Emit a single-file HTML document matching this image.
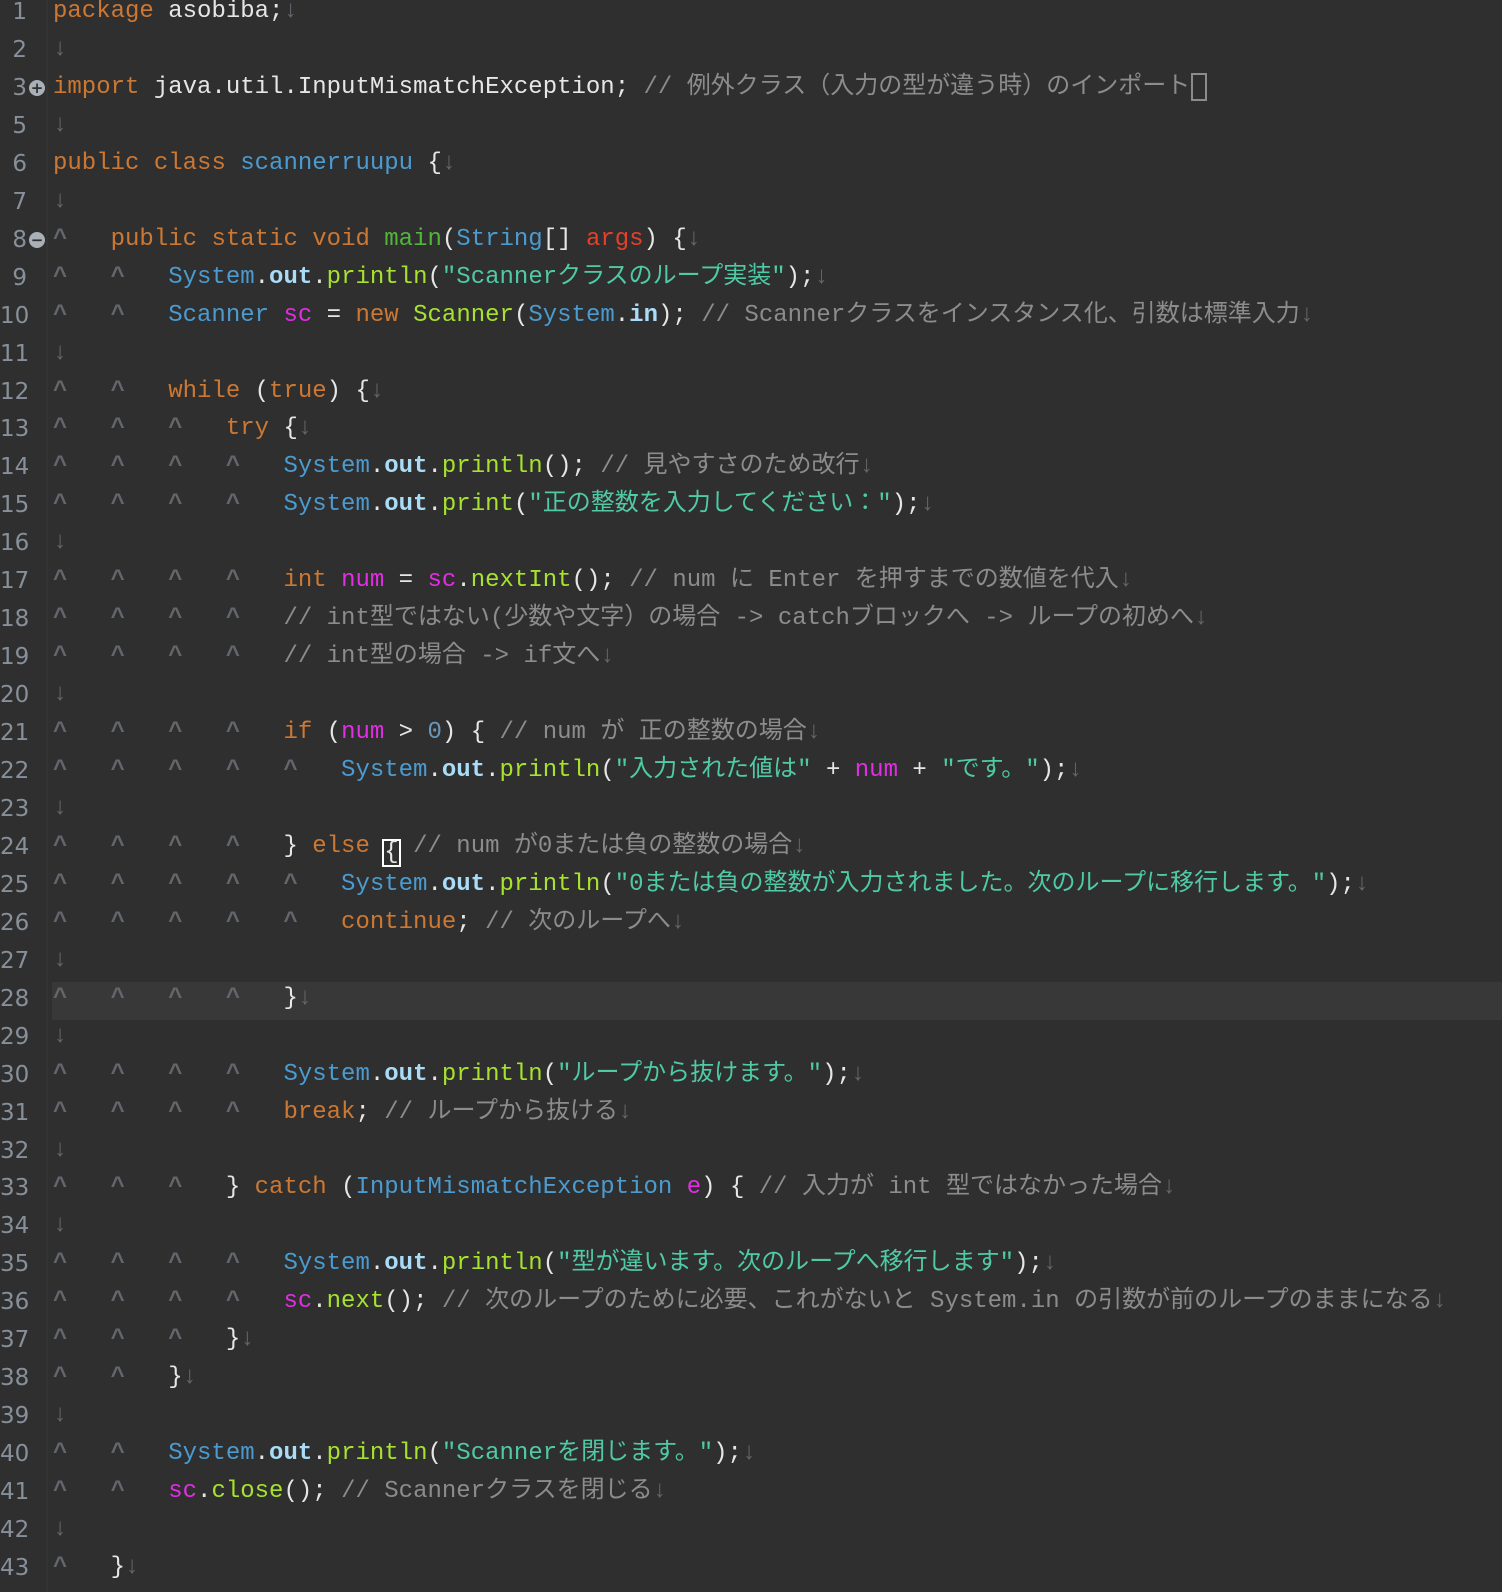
<!DOCTYPE html>
<html><head><meta charset="utf-8">
<style>
html,body{margin:0;padding:0;background:#2f2f2f;width:1502px;height:1592px;overflow:hidden}
#ed{position:relative;width:1502px;height:1592px;font-family:"Liberation Mono","Noto Sans CJK JP",monospace;font-size:24px;color:#e6e6e6}
.row{position:absolute;left:0;width:1502px;height:38px;line-height:38px;white-space:pre}
.ln{position:absolute;left:0;width:27px;text-align:right;font-family:"DejaVu Sans","Liberation Sans",sans-serif;font-size:23px;color:#87909a}
.code{position:absolute;left:53px}
.sep{position:absolute;left:46px;top:0;width:2px;height:1592px;background:#333}
.hl{position:absolute;left:52px;width:1450px;height:38px;background:#383838}
.k{color:#cc7833}.t{color:#4b9bd0}.o{color:#a9dcf7;font-weight:bold}.m{color:#a6e22e}
.g{color:#52b63b}.s{color:#4fcaa5}.v{color:#e12de3}.a{color:#e5402b}.c{color:#8c8c8c}
.n{color:#6897bb}.w{color:#63666b;font-weight:bold}
.fold{position:absolute;left:29px;width:16px;height:16px;border-radius:50%;background:#a9b0b8;color:#2f2f2f;font:bold 15px/16px "DejaVu Sans",sans-serif;text-align:center}
.box{display:inline-block;width:12px;height:24px;border:2px solid #8c8c8c;vertical-align:middle;margin-left:1px}
.cur{display:inline-block;border:2px solid #fff;height:24px;line-height:24px;vertical-align:-6px;margin:0 -2px}
</style></head><body><div id="ed">
<div class="sep"></div>
<div class="hl" style="top:982px"></div>
<div id="rows"></div>
</div>
<script>
var T='<span class="w">^   </span>';
function t(n){return T.repeat(n);}
var D='<span class="w">↓</span>';
var L=[
[1,'<span class="k">package</span> asobiba;'+D],
[2,D],
[3,'<span class="k">import</span> java.util.InputMismatchException; <span class="c">// 例外クラス（入力の型が違う時）のインポート</span><span class="box"></span>'],
[5,D],
[6,'<span class="k">public</span> <span class="k">class</span> <span class="t">scannerruupu</span> {'+D],
[7,D],
[8,t(1)+'<span class="k">public</span> <span class="k">static</span> <span class="k">void</span> <span class="g">main</span>(<span class="t">String</span>[] <span class="a">args</span>) {'+D],
[9,t(2)+'<span class="t">System</span>.<span class="o">out</span>.<span class="m">println</span>(<span class="s">"Scannerクラスのループ実装"</span>);'+D],
[10,t(2)+'<span class="t">Scanner</span> <span class="v">sc</span> = <span class="k">new</span> <span class="m">Scanner</span>(<span class="t">System</span>.<span class="o">in</span>); <span class="c">// Scannerクラスをインスタンス化、引数は標準入力</span>'+D],
[11,D],
[12,t(2)+'<span class="k">while</span> (<span class="k">true</span>) {'+D],
[13,t(3)+'<span class="k">try</span> {'+D],
[14,t(4)+'<span class="t">System</span>.<span class="o">out</span>.<span class="m">println</span>(); <span class="c">// 見やすさのため改行</span>'+D],
[15,t(4)+'<span class="t">System</span>.<span class="o">out</span>.<span class="m">print</span>(<span class="s">"正の整数を入力してください："</span>);'+D],
[16,D],
[17,t(4)+'<span class="k">int</span> <span class="v">num</span> = <span class="v">sc</span>.<span class="m">nextInt</span>(); <span class="c">// num に Enter を押すまでの数値を代入</span>'+D],
[18,t(4)+'<span class="c">// int型ではない(少数や文字）の場合 -> catchブロックへ -> ループの初めへ</span>'+D],
[19,t(4)+'<span class="c">// int型の場合 -> if文へ</span>'+D],
[20,D],
[21,t(4)+'<span class="k">if</span> (<span class="v">num</span> > <span class="n">0</span>) { <span class="c">// num が 正の整数の場合</span>'+D],
[22,t(5)+'<span class="t">System</span>.<span class="o">out</span>.<span class="m">println</span>(<span class="s">"入力された値は"</span> + <span class="v">num</span> + <span class="s">"です。"</span>);'+D],
[23,D],
[24,t(4)+'} <span class="k">else</span> <span class="cur">{</span> <span class="c">// num が0または負の整数の場合</span>'+D],
[25,t(5)+'<span class="t">System</span>.<span class="o">out</span>.<span class="m">println</span>(<span class="s">"0または負の整数が入力されました。次のループに移行します。"</span>);'+D],
[26,t(5)+'<span class="k">continue</span>; <span class="c">// 次のループへ</span>'+D],
[27,D],
[28,t(4)+'}'+D],
[29,D],
[30,t(4)+'<span class="t">System</span>.<span class="o">out</span>.<span class="m">println</span>(<span class="s">"ループから抜けます。"</span>);'+D],
[31,t(4)+'<span class="k">break</span>; <span class="c">// ループから抜ける</span>'+D],
[32,D],
[33,t(3)+'} <span class="k">catch</span> (<span class="t">InputMismatchException</span> <span class="v">e</span>) { <span class="c">// 入力が int 型ではなかった場合</span>'+D],
[34,D],
[35,t(4)+'<span class="t">System</span>.<span class="o">out</span>.<span class="m">println</span>(<span class="s">"型が違います。次のループへ移行します"</span>);'+D],
[36,t(4)+'<span class="v">sc</span>.<span class="m">next</span>(); <span class="c">// 次のループのために必要、これがないと System.in の引数が前のループのままになる</span>'+D],
[37,t(3)+'}'+D],
[38,t(2)+'}'+D],
[39,D],
[40,t(2)+'<span class="t">System</span>.<span class="o">out</span>.<span class="m">println</span>(<span class="s">"Scannerを閉じます。"</span>);'+D],
[41,t(2)+'<span class="v">sc</span>.<span class="m">close</span>(); <span class="c">// Scannerクラスを閉じる</span>'+D],
[42,D],
[43,t(1)+'}'+D]
];
var h='';
L.forEach(function(r,i){
  var top=(-7+i*37.95).toFixed(2);
  h+='<div class="row" style="top:'+top+'px"><span class="ln">'+r[0]+'</span><span class="code">'+r[1]+'</span></div>';
  if(r[0]==3) h+='<div class="fold" style="top:'+(+top+11)+'px">+</div>';
  if(r[0]==8) h+='<div class="fold" style="top:'+(+top+11)+'px">−</div>';
});
document.getElementById('rows').innerHTML=h;
</script>
</body></html>
